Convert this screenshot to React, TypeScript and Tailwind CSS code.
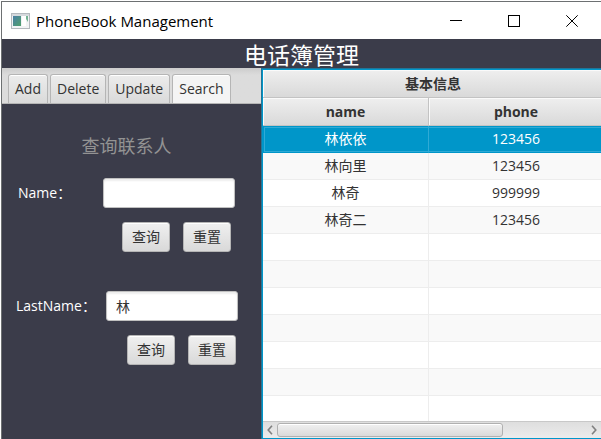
import { useState } from "react";
import clsx from "clsx";

const tabs = ["Add", "Delete", "Update", "Search"];

const contacts = [
  { name: "林依依", phone: "123456" },
  { name: "林向里", phone: "123456" },
  { name: "林奇", phone: "999999" },
  { name: "林奇二", phone: "123456" },
];

const EMPTY_ROWS = 7;

function AppIcon() {
  return (
    <svg width="19" height="16" viewBox="0 0 19 16" aria-hidden="true">
      <defs>
        <linearGradient id="screen" x1="0" y1="0" x2="1" y2="1">
          <stop offset="0" stopColor="#4a7fa6" />
          <stop offset="1" stopColor="#4fa06c" />
        </linearGradient>
      </defs>
      <rect x="0.5" y="0.5" width="18" height="15" fill="#f1f3f5" stroke="#b4b9be" />
      <rect x="1" y="1" width="17" height="2" fill="#d5d9dd" />
      <rect x="2" y="3" width="8" height="10" fill="url(#screen)" />
      <rect x="11" y="3" width="4" height="10" fill="#ffffff" />
      <path d="M15 3h2v6l-2-3z" fill="#74b393" />
    </svg>
  );
}

function TitleBar() {
  return (
    <div className="flex h-[37px] shrink-0 items-center bg-white pl-[9px]">
      <AppIcon />
      <h1 className="ml-1.5 flex-1 text-[15px] leading-5 text-black">PhoneBook Management</h1>
      <div className="flex">
        <button type="button" aria-label="Minimize" className="flex h-9 w-[58px] items-center justify-center">
          <svg width="12" height="12" viewBox="0 0 12 12" stroke="#000">
            <path d="M0 5.5h12" />
          </svg>
        </button>
        <button type="button" aria-label="Maximize" className="flex h-9 w-[58px] items-center justify-center">
          <svg width="12" height="12" viewBox="0 0 12 12" stroke="#000" fill="none">
            <rect x="0.5" y="0.5" width="11" height="11" />
          </svg>
        </button>
        <button type="button" aria-label="Close" className="flex h-9 w-[58px] items-center justify-center">
          <svg width="12" height="12" viewBox="0 0 12 12" stroke="#000" fill="none">
            <path d="M0.3 0.3l11.4 11.4M11.7 0.3L0.3 11.7" />
          </svg>
        </button>
      </div>
    </div>
  );
}

function FormButton({ type, children }: { type: "submit" | "reset"; children: string }) {
  return (
    <button
      type={type}
      className="h-[30px] w-12 rounded-[3px] border border-[#b5b5b5] bg-linear-to-b from-[#f0f0f0] to-[#d9d9d9] text-sm leading-5 text-[#333] shadow-[inset_0_1px_0_#fff]"
    >
      {children}
    </button>
  );
}

type SearchFormProps = {
  id: string;
  label: string;
  value: string;
  className: string;
  labelClass: string;
  buttonsClass: string;
};

function SearchForm({ id, label, value, className, labelClass, buttonsClass }: SearchFormProps) {
  return (
    <form className={className} onSubmit={(e) => e.preventDefault()}>
      <div className="flex items-center">
        <label htmlFor={id} className={clsx("shrink-0 text-sm leading-5 text-white", labelClass)}>
          {label}
        </label>
        <input
          id={id}
          type="text"
          defaultValue={value}
          className="h-[30px] w-[132px] rounded-[3px] border border-[#c0c0c0] bg-white px-[9px] text-sm leading-5 text-[#333] shadow-[inset_0_2px_2px_#eee] outline-none"
        />
      </div>
      <div className={clsx("mt-3.5 flex gap-[13px]", buttonsClass)}>
        <FormButton type="submit">查询</FormButton>
        <FormButton type="reset">重置</FormButton>
      </div>
    </form>
  );
}

function SidePanel() {
  const [active, setActive] = useState("Search");
  return (
    <section className="flex w-[259px] shrink-0 flex-col">
      <div
        role="tablist"
        className="flex h-9 items-end gap-0.5 border-b border-[#b5b5b5] bg-linear-to-b from-[#cccccc] to-[#dcdcdc] to-20% pl-1.5"
      >
        {tabs.map((tab) => (
          <button
            key={tab}
            type="button"
            role="tab"
            aria-selected={tab === active}
            onClick={() => setActive(tab)}
            className={clsx(
              "h-[29px] rounded-t-[3px] border border-b-0 border-[#b5b5b5] px-1.5 text-sm leading-5 text-[#333] shadow-[inset_0_1px_0_#fff]",
              tab === active ? "bg-[#f4f4f4]" : "bg-linear-to-b from-[#ececec] to-[#dadada]",
            )}
          >
            {tab}
          </button>
        ))}
      </div>
      <div role="tabpanel" className="flex-1 pt-[30px]">
        <h3 className="pr-2.5 text-center text-lg leading-6 text-[#939393]">查询联系人</h3>
        <SearchForm
          id="name"
          label="Name："
          value=""
          className="mt-5 pl-4"
          labelClass="w-[85px]"
          buttonsClass="pl-[104px]"
        />
        <SearchForm
          id="last-name"
          label="LastName："
          value="林"
          className="mt-[39px] pl-3.5"
          labelClass="w-[90px]"
          buttonsClass="pl-[111px]"
        />
      </div>
    </section>
  );
}

const headCell =
  "h-7 border-b border-[#c3c3c3] bg-linear-to-b from-[#efefef] to-[#d9d9d9] p-0 text-sm leading-5 font-bold shadow-[inset_1px_1px_0_#fafafa]";

function ContactTable() {
  return (
    <section className="flex min-w-0 flex-1 flex-col border-t border-l border-[#1f7599]">
      <div className="flex min-h-0 flex-1 flex-col border-y border-l border-[#0096c9]">
        <div className="min-h-0 flex-1 overflow-hidden bg-white">
          <table className="w-[calc(100%+2px)] table-fixed border-separate border-spacing-0 text-center text-sm leading-5 text-[#333]">
            <colgroup>
              <col className="w-[166px]" />
              <col />
            </colgroup>
            <thead>
              <tr>
                <th colSpan={2} className={headCell}>
                  基本信息
                </th>
              </tr>
              <tr>
                <th className={clsx(headCell, "border-r")}>name</th>
                <th className={headCell}>phone</th>
              </tr>
            </thead>
            <tbody>
              {contacts.map((contact, i) => (
                <tr
                  key={i}
                  className={clsx(
                    i === 0
                      ? "bg-[#0096c9] text-white outline outline-[#30aad5] -outline-offset-2"
                      : "even:bg-[#f9f9f9]",
                  )}
                >
                  <td
                    className={clsx(
                      "h-[27px] border-r border-b p-0",
                      i === 0 ? "border-r-[#30aad5] border-b-[#0096c9]" : "border-[#ededed]",
                    )}
                  >
                    {contact.name}
                  </td>
                  <td className={clsx("h-[27px] border-b p-0", i === 0 ? "border-[#0096c9]" : "border-[#ededed]")}>
                    {contact.phone}
                  </td>
                </tr>
              ))}
              {Array.from({ length: EMPTY_ROWS }, (_, i) => (
                <tr key={`empty-${i}`} className="even:bg-[#f9f9f9]">
                  <td className="h-[27px] border-r border-b border-[#ededed] p-0" />
                  <td className="h-[27px] border-b border-[#ededed] p-0" />
                </tr>
              ))}
            </tbody>
          </table>
        </div>
        <div className="flex h-[17px] shrink-0 items-center border-t border-[#c8c8c8] bg-linear-to-b from-[#dedede] to-[#ececec]">
          <button type="button" aria-label="Scroll left" className="flex h-4 w-3.5 shrink-0 items-center justify-center">
            <svg width="6" height="10" viewBox="0 0 6 10" fill="none" stroke="#808080" strokeWidth="1.6">
              <path d="M5 0.8L1.2 5L5 9.2" />
            </svg>
          </button>
          <div className="flex-1">
            <div className="h-3.5 w-[73%] rounded-[3px] border border-[#b0b0b0] bg-linear-to-b from-[#f0f0f0] to-[#dadada] shadow-[inset_0_1px_0_#fff]" />
          </div>
          <button type="button" aria-label="Scroll right" className="flex h-4 w-3.5 shrink-0 items-center justify-center">
            <svg width="6" height="10" viewBox="0 0 6 10" fill="none" stroke="#808080" strokeWidth="1.6">
              <path d="M1 0.8L4.8 5L1 9.2" />
            </svg>
          </button>
        </div>
      </div>
    </section>
  );
}

export default function App() {
  return (
    <div className="flex h-screen flex-col bg-white pt-px pl-px font-['Open_Sans','Noto_Sans_CJK_SC',sans-serif]">
      <div className="flex min-h-0 flex-1 flex-col border-t border-l border-[#6d7072] bg-[#3b3c4a]">
        <TitleBar />
        <h2 className="h-[29px] shrink-0 text-center text-[23px] leading-8 text-white">电话簿管理</h2>
        <main className="flex min-h-0 flex-1">
          <SidePanel />
          <ContactTable />
        </main>
      </div>
    </div>
  );
}
